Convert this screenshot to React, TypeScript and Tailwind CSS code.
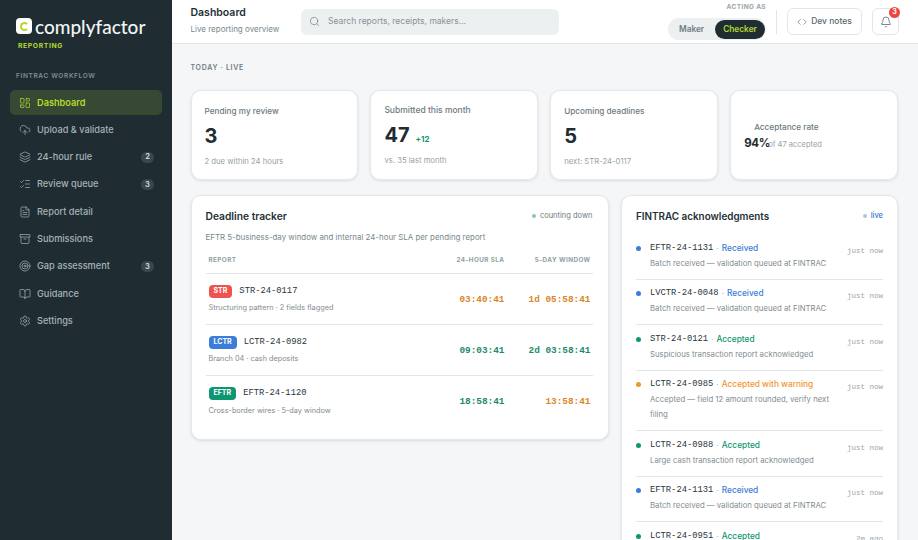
import {
  LayoutDashboard,
  CloudUpload,
  Layers,
  ListChecks,
  FileText,
  Archive,
  Target,
  BookOpen,
  Settings,
  Search,
  Code,
  Bell,
} from "lucide-react";

const sans = "font-['Inter','Noto_Sans',sans-serif]";
const mono = "font-['Liberation_Mono',monospace]";

const navItems = [
  { label: "Dashboard", icon: LayoutDashboard, active: true },
  { label: "Upload & validate", icon: CloudUpload },
  { label: "24-hour rule", icon: Layers, badge: "2" },
  { label: "Review queue", icon: ListChecks, badge: "3" },
  { label: "Report detail", icon: FileText },
  { label: "Submissions", icon: Archive },
  { label: "Gap assessment", icon: Target, badge: "3" },
  { label: "Guidance", icon: BookOpen },
  { label: "Settings", icon: Settings },
];

const trackerRows = [
  {
    tag: "STR",
    tagClass: "bg-[#ef5350]",
    id: "STR-24-0117",
    note: "Structuring pattern · 2 fields flagged",
    sla: "03:40:41",
    slaClass: "text-[#dd8526]",
    window: "1d 05:58:41",
    windowClass: "text-[#dd8526]",
  },
  {
    tag: "LCTR",
    tagClass: "bg-[#3b7dd8]",
    id: "LCTR-24-0982",
    note: "Branch 04 · cash deposits",
    sla: "09:03:41",
    slaClass: "text-[#1c8a6c]",
    window: "2d 03:58:41",
    windowClass: "text-[#1c8a6c]",
  },
  {
    tag: "EFTR",
    tagClass: "bg-[#0f9670]",
    id: "EFTR-24-1120",
    note: "Cross-border wires · 5-day window",
    sla: "18:58:41",
    slaClass: "text-[#1c8a6c]",
    window: "13:58:41",
    windowClass: "text-[#dd8526]",
  },
];

const blue = { dot: "bg-[#3b7dd8]", text: "text-[#3b7dd8]" };
const green = { dot: "bg-[#0f9670]", text: "text-[#0f9670]" };
const orange = { dot: "bg-[#f0962e]", text: "text-[#f0962e]" };

const acks = [
  { id: "EFTR-24-1131", status: "Received", tone: blue, note: "Batch received — validation queued at FINTRAC", time: "just now" },
  { id: "LVCTR-24-0048", status: "Received", tone: blue, note: "Batch received — validation queued at FINTRAC", time: "just now" },
  { id: "STR-24-0121", status: "Accepted", tone: green, note: "Suspicious transaction report acknowledged", time: "just now" },
  { id: "LCTR-24-0985", status: "Accepted with warning", tone: orange, note: "Accepted — field 12 amount rounded, verify next filing", time: "just now" },
  { id: "LCTR-24-0988", status: "Accepted", tone: green, note: "Large cash transaction report acknowledged", time: "just now" },
  { id: "EFTR-24-1131", status: "Received", tone: blue, note: "Batch received — validation queued at FINTRAC", time: "just now" },
  { id: "LCTR-24-0951", status: "Accepted", tone: green, note: "Large cash transaction report acknowledged", time: "2m ago" },
];

function Sidebar() {
  return (
    <aside className="w-[172px] shrink-0 bg-[#1f2d33] flex flex-col">
      <div className="pl-4 pt-[17px]">
        <div className="flex items-center gap-[3px] h-[18px]">
          <div className="w-[16px] h-[16px] rounded-[4px] bg-white flex items-center justify-center">
            <div className="w-[9px] h-[9px] rounded-full border-[2px] border-[#b5d92f] border-r-transparent" />
          </div>
          <span className="text-[19px] leading-none font-medium text-[#f2f5f5] font-['Lato',sans-serif]">complyfactor</span>
        </div>
        <div className="mt-[6px] ml-[2px] text-[6.8px] leading-[10px] font-bold tracking-[0.09em] text-[#b5d92f]">REPORTING</div>
      </div>
      <div className="pl-4 mt-[20px] text-[6.5px] leading-[10px] font-semibold tracking-[0.1em] text-[#7f8f94]">FINTRAC WORKFLOW</div>
      <nav className="mt-[9px] flex flex-col gap-[2.3px] pl-[10px] pr-[10px]">
        {navItems.map((item) => (
          <div
            key={item.label}
            className={`h-[25px] rounded-[5px] flex items-center pl-[9px] pr-[8px] ${item.active ? "bg-[#364933]" : ""}`}
          >
            <item.icon size={12} strokeWidth={1.4} className={`mr-[6px] ${item.active ? "text-[#b5d92f]" : "text-[#a7b3b7]"}`} />
            <span className={`text-[9.2px] ${item.active ? "font-semibold text-[#b5d92f]" : "font-medium text-[#a7b3b7]"}`}>
              {item.label}
            </span>
            {item.badge && (
              <span className="ml-auto w-[13px] h-[11px] rounded-full bg-[#36474d] text-[#c7d0d3] text-[7.5px] font-bold flex items-center justify-center">
                {item.badge}
              </span>
            )}
          </div>
        ))}
      </nav>
    </aside>
  );
}

function Topbar() {
  return (
    <header className="h-[44px] shrink-0 bg-white border-b border-[#e3e6e8] flex items-center pl-[18.5px] pr-[19px]">
      <div className="w-[110.5px] pb-[2px]">
        <div className="text-[10.5px] leading-[13px] font-semibold text-[#243036]">Dashboard</div>
        <div className="mt-[5px] text-[8px] leading-[11px] text-[#7a878c]">Live reporting overview</div>
      </div>
      <div className="w-[258px] h-[26px] rounded-[6px] bg-[#ecf0f1] flex items-center pl-2 gap-[8px]">
        <Search size={11} strokeWidth={1.4} className="text-[#69777c]" />
        <span className="text-[8.5px] text-[#86939a]">Search reports, receipts, makers...</span>
      </div>
      <div className="ml-auto flex items-center">
        <div className="flex flex-col items-end">
          <div className="text-[6.5px] leading-[8px] font-bold tracking-[0.06em] text-[#9aa5a9]">ACTING AS</div>
          <div className="mt-[7px] h-[22px] w-[98px] rounded-full bg-[#ecf0f1] flex items-center pl-[3px] pr-[1px] justify-between">
            <span className="pl-[8px] text-[8.3px] font-semibold text-[#6f7c82]">Maker</span>
            <span className="h-[19px] w-[50px] rounded-full bg-[#1f2d33] text-[8.3px] font-semibold text-[#b5d92f] flex items-center justify-center">Checker</span>
          </div>
        </div>
        <div className="w-px h-[24px] bg-[#e3e6e8] mx-[10px]" />
        <button className="h-[27px] w-[75px] rounded-[6px] border border-[#e3e6e8] bg-white flex items-center justify-center gap-[4px] text-[8.5px] font-medium text-[#5c6a70]">
          <Code size={10} strokeWidth={1.5} />
          Dev notes
        </button>
        <button className="relative ml-[10px] h-[27px] w-[27px] rounded-[6px] border border-[#e3e6e8] bg-white flex items-center justify-center text-[#46545a]">
          <Bell size={12} strokeWidth={1.4} />
          <span className="absolute -top-[2px] -right-[2px] w-[11px] h-[11px] rounded-full bg-[#ef4444] text-white text-[7px] font-bold flex items-center justify-center">3</span>
        </button>
      </div>
    </header>
  );
}

function StatCard({
  title,
  value,
  extra,
  note,
  titleClass = "pt-[14px] text-[8.2px]",
}: {
  title: string;
  value: string;
  extra?: string;
  note: string;
  titleClass?: string;
}) {
  return (
    <div className="h-[90px] rounded-[10px] bg-white border border-[#e6e9eb] shadow-[0_1px_3px_rgba(30,45,50,0.12)] pl-[13px]">
      <div className={`leading-[12px] font-medium text-[#6d7a80] ${titleClass}`}>{title}</div>
      <div className="mt-[6px] flex items-baseline gap-[6px]">
        <span className="text-[20px] leading-[26px] font-bold text-[#212c31]">{value}</span>
        {extra && <span className="text-[8px] font-bold text-[#0f9670]">{extra}</span>}
      </div>
      <div className="mt-[7px] text-[7.7px] leading-[11px] text-[#96a2a6]">{note}</div>
    </div>
  );
}

function AcceptanceCard() {
  return (
    <div className="h-[90px] rounded-[10px] bg-white border border-[#e6e9eb] shadow-[0_1px_3px_rgba(30,45,50,0.12)] flex flex-col justify-center pl-[13px]">
      <div className="ml-[10px] pt-[1px] text-[8.2px] leading-[12px] font-medium text-[#6d7a80]">Acceptance rate</div>
      <div className="mt-[2px] flex items-baseline">
        <span className="text-[11.5px] leading-[16px] font-bold tracking-tight text-[#212c31]">94%</span>
        <span className="text-[7.5px] text-[#96a2a6] -ml-[2px]">of 47 accepted</span>
      </div>
    </div>
  );
}

function DeadlineTracker() {
  return (
    <section className="h-[245px] rounded-[10px] bg-white border border-[#e6e9eb] shadow-[0_1px_3px_rgba(30,45,50,0.14)] pl-[14px] pr-[15px] pt-[13px]">
      <div className="flex items-center justify-between">
        <h2 className="text-[10.25px] leading-[14px] font-semibold text-[#243036]">Deadline tracker</h2>
        <div className="flex items-center gap-[4px] text-[7.5px] text-[#6d7a80]">
          <span className="w-[4px] h-[4px] rounded-full bg-[#84c8b5]" />
          counting down
        </div>
      </div>
      <p className="mt-[8px] text-[7.9px] leading-[12px] text-[#7a878c]">EFTR 5-business-day window and internal 24-hour SLA per pending report</p>
      <div className="mt-[5px] h-[26px] flex items-center pl-[3px] pr-[2px] text-[6.3px] font-bold tracking-[0.07em] text-[#929ea3] border-b border-[#e3e6e8]">
        <span className="flex-1">REPORT</span>
        <span className="w-[70px] text-right">24-HOUR SLA</span>
        <span className="w-[86px] text-right">5-DAY WINDOW</span>
      </div>
      {trackerRows.map((row) => (
        <div key={row.id} className="h-[51px] flex items-center pl-[3px] pr-[2px] border-b last:border-b-0 border-[#e3e6e8]">
          <div className="flex-1 pb-[1px]">
            <div className="flex items-center gap-[7px]">
              <span className={`h-[13px] px-[5px] rounded-[4px] text-white text-[7px] font-bold flex items-center ${row.tagClass}`}>{row.tag}</span>
              <span className={`${mono} pt-[1px] text-[8.8px] font-medium text-[#2b363b]`}>{row.id}</span>
            </div>
            <div className="mt-[5px] text-[7.3px] leading-[10px] text-[#7f8b90]">{row.note}</div>
          </div>
          <span className={`${mono} w-[70px] pt-[2px] text-right text-[9.4px] font-bold ${row.slaClass}`}>{row.sla}</span>
          <span className={`${mono} w-[86px] pt-[2px] text-right text-[9.4px] font-bold ${row.windowClass}`}>{row.window}</span>
        </div>
      ))}
    </section>
  );
}

function Acknowledgments() {
  return (
    <section className="rounded-[10px] bg-white border border-[#e6e9eb] shadow-[0_1px_3px_rgba(30,45,50,0.14)] px-[14px] pt-[13px] pb-4">
      <div className="flex items-center justify-between">
        <h2 className="text-[9.9px] leading-[14px] font-semibold text-[#243036]">FINTRAC acknowledgments</h2>
        <div className="flex items-center gap-[4px] text-[7.5px] font-medium text-[#3b7dd8]">
          <span className="w-[4px] h-[4px] rounded-full bg-[#a9c6ea]" />
          live
        </div>
      </div>
      <div className="mt-[11px]">
        {acks.map((a, i) => (
          <div key={i} className="flex pt-[7.5px] pb-[8px] border-b last:border-b-0 border-[#e3e6e8]">
            <span className={`mt-[4px] w-[5px] h-[5px] rounded-full shrink-0 mr-[9px] ${a.tone.dot}`} />
            <div className="flex-1 min-w-0">
              <div className="text-[8.3px] leading-[13px] flex items-center">
                <span className={`${mono} text-[8.8px] font-medium text-[#2b363b]`}>{a.id}</span>
                <span className="text-[#a7b3b7] mx-[3px]">·</span>
                <span className={`font-medium ${a.tone.text}`}>{a.status}</span>
              </div>
              <div className="mt-[1px] text-[7.75px] leading-[15px] text-[#7f8b90] pr-[6px]">{a.note}</div>
            </div>
            <span className={`${mono} mt-[4px] shrink-0 text-[7.5px] leading-[11px] text-[#9aa5a9]`}>{a.time}</span>
          </div>
        ))}
      </div>
    </section>
  );
}

export default function App() {
  return (
    <div className={`${sans} w-[918px] h-[540px] flex overflow-hidden bg-[#f5f6f8]`}>
      <Sidebar />
      <div className="flex-1 min-w-0 flex flex-col">
        <Topbar />
        <main className="flex-1 min-h-0 overflow-hidden pl-[18.5px] pr-[20px] pt-[19px]">
          <div className="text-[7px] leading-[9px] font-semibold tracking-[0.1em] text-[#6f7c82]">TODAY · LIVE</div>
          <div className="mt-[18px] grid grid-cols-4 gap-3">
            <StatCard title="Pending my review" value="3" note="2 due within 24 hours" />
            <StatCard title="Submitted this month" value="47" extra="+12" note="vs. 35 last month" titleClass="pt-[13px] mb-[1px] text-[8.5px]" />
            <StatCard title="Upcoming deadlines" value="5" note="next: STR-24-0117" />
            <AcceptanceCard />
          </div>
          <div className="mt-[15px] grid grid-cols-[418px_1fr] gap-[12.5px] items-start">
            <DeadlineTracker />
            <Acknowledgments />
          </div>
        </main>
      </div>
    </div>
  );
}
